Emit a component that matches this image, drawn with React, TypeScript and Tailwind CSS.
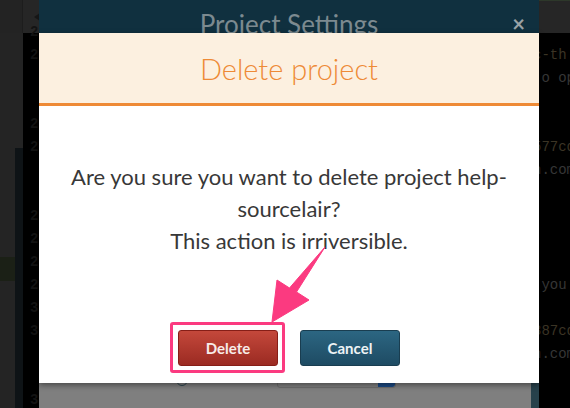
import React from "react";

// line numbers in the gutter, 23px rows starting so row centre sits at y=32
const gutter = ["2", "2", "", "", "2", "2", "", "", "2", "2", "2", "2", "3", "3", "", "", "3"];

// code lines peeking out on the right of the settings modal
const code: Record<number, { text: string; color: string }> = {
  1: { text: "c-th", color: "text-[#3b3425]" },
  2: { text: " o op", color: "text-[#363636]" },
  5: { text: "577cd", color: "text-[#3b3425]" },
  6: { text: "n.com", color: "text-[#363636]" },
  11: { text: " you", color: "text-[#363636]" },
  13: { text: "387cd", color: "text-[#3b3425]" },
  14: { text: "n.com", color: "text-[#363636]" },
};

function Editor() {
  return (
    <div className="flex flex-col h-[408px]">
      {/* top bar */}
      <div className="flex h-[33px] flex-none bg-[#232323]">
        <div className="w-[23px] border-r border-[#1d1d1d]" />
        <div className="w-[16px] bg-[#262626] flex items-center justify-end">
          <svg width="6" height="8" viewBox="0 0 6 8" className="mr-[-1px]">
            <polygon points="6,0 6,8 0,4" fill="#161616" />
          </svg>
        </div>
        <div className="flex-1 bg-[#262626] border-t border-[#2d382a]" />
      </div>

      <div className="flex flex-1 min-h-0">
        {/* file panel */}
        <div className="flex w-[23px] flex-none">
          <div className="flex w-[15px] flex-col bg-[#242424]">
            <div className="h-[224px]" />
            <div className="h-[24px] bg-[#1b2016]" />
          </div>
          <div className="flex w-[8px] flex-col bg-[#242424]">
            <div className="h-[115px]" />
            <div className="flex-1 bg-[#0e1316]" />
          </div>
        </div>

        {/* gutter + code */}
        <div className="flex flex-1 flex-col -mt-[13px] font-['Liberation_Mono',monospace] text-[14px]">
          {gutter.map((n, i) => (
            <div key={i} className="flex h-[23px] flex-none items-center leading-none">
              <span className="w-[16px] pl-[7px] font-bold text-[#131313]">{n}</span>
              <span className={`pl-[494px] whitespace-pre ${code[i]?.color ?? ""}`}>{code[i]?.text ?? ""}</span>
            </div>
          ))}
        </div>
      </div>
    </div>
  );
}

function SettingsBehind() {
  return (
    <div className="absolute left-[39px] top-0 flex h-[408px] w-[500px] flex-col bg-[#7f7f7f] font-['Lato',sans-serif]">
      <div className="relative h-[70px] flex-none bg-[#10303f] text-center">
        <div className="pt-[8px] text-[26px] leading-[32px] text-[#7c8a90]">Project Settings</div>
        <span className="absolute right-[14px] top-[13px] text-[22px] font-bold leading-[22px] text-[#9aa2a6]">×</span>
      </div>
      <div className="flex flex-1">
        <div className="flex-1 bg-[#7f7f7f]">
          <div className="flex items-end pl-[137px] pt-[296px]">
            <div className="mb-[2px] h-[12px] w-[12px] rounded-full border-[1.5px] border-[#2d4650]" />
            <div className="ml-[89px] flex h-[22px] w-[119px] items-stretch rounded-[3px] border border-[#6d6d6d]">
              <div className="flex-1" />
              <div className="w-[17px] rounded-r-[3px] bg-[#1b4a86]" />
            </div>
          </div>
        </div>
        <div className="w-[8px] bg-[#27414b]" />
      </div>
    </div>
  );
}

function DeleteModal() {
  return (
    <div className="absolute left-[39px] top-[33px] flex h-[350px] w-[500px] flex-col bg-white shadow-[0_2px_6px_rgba(0,0,0,0.45)] font-['Lato',sans-serif]">
      <div className="flex h-[73px] flex-none items-center justify-center border-b-[3px] border-[#ee8a36] bg-[#fcf0e0]">
        <h2 className="text-[29px] font-light leading-none text-[#ee8a36]">Delete project</h2>
      </div>
      <div className="flex flex-1 flex-col items-center px-[27px] pt-[55px]">
        <p className="text-center text-[22px] leading-[32px] text-[#383838]">
          Are you sure you want to delete project help-sourcelair?
          <br />
          This action is irriversible.
        </p>
        <div className="mt-[73px] flex gap-[22px]">
          <div className="relative">
            <div className="absolute -left-[8px] -top-[8px] -right-[7px] -bottom-[7px] rounded-[3px] border-[3px] border-[#fb3a80]" />
            <button className="relative h-[36px] w-[100px] rounded-[3px] border border-[#861e17] bg-gradient-to-b from-[#c4483b] to-[#9b2a22] text-[15px] font-bold text-[#f7ece9]">
              Delete
            </button>
          </div>
          <button className="h-[36px] w-[100px] rounded-[3px] border border-[#193d50] bg-gradient-to-b from-[#2c6682] to-[#1e4b63] text-[15px] font-bold text-[#eef3f5]">
            Cancel
          </button>
        </div>
      </div>
    </div>
  );
}

export default function App() {
  return (
    <div className="relative h-[408px] w-[570px] overflow-hidden bg-black">
      <Editor />
      <SettingsBehind />
      <DeleteModal />
      {/* annotation arrow */}
      <svg className="pointer-events-none absolute left-0 top-0" width="570" height="408" viewBox="0 0 570 408">
        <polygon
          points="325,247 296.5,292 309,300 272,322 277,280 289.5,288"
          fill="#fb3a80"
          stroke="#fb3a80"
          strokeWidth="1"
          strokeLinejoin="round"
        />
      </svg>
    </div>
  );
}
